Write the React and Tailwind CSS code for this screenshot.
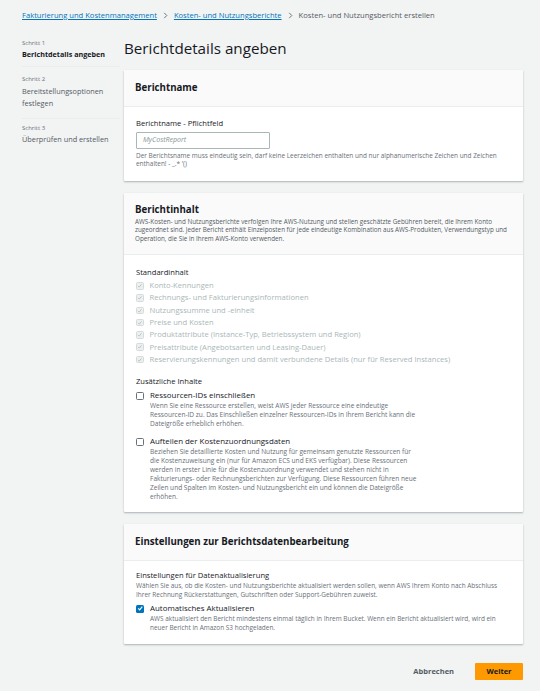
import React from "react";

function Chevron() {
  return (
    <svg viewBox="0 0 8 8" className="w-[7px] h-[7px] mx-[5px] text-[#687078]" fill="none" stroke="currentColor" strokeWidth="1.1">
      <path d="M2.5 1 L5.5 4 L2.5 7" />
    </svg>
  );
}

function Box({ checked, disabled }) {
  if (disabled) {
    return (
      <div className="w-[7.5px] h-[7.5px] shrink-0 rounded-[1.5px] border border-[#d5dbdb] bg-[#eef0f0] flex items-center justify-center">
        <svg viewBox="0 0 8 8" className="w-[5.5px] h-[5.5px]" fill="none" stroke="#b8c2c3" strokeWidth="1.4">
          <path d="M1.5 4.2 L3.3 6 L6.5 2" />
        </svg>
      </div>
    );
  }
  if (checked) {
    return (
      <div className="w-[8px] h-[8px] shrink-0 rounded-[1.5px] bg-[#0073bb] flex items-center justify-center">
        <svg viewBox="0 0 8 8" className="w-[6.5px] h-[6.5px]" fill="none" stroke="#ffffff" strokeWidth="1.4">
          <path d="M1.5 4.2 L3.3 6 L6.5 2" />
        </svg>
      </div>
    );
  }
  return <div className="w-[8px] h-[8px] shrink-0 rounded-[1.5px] border border-[#687078] bg-white" />;
}

function Card({ title, desc, children, bodyClass }) {
  return (
    <div className="bg-white shadow-[0_1px_2px_rgba(0,28,36,0.3)] rounded-[1px]">
      <div className={"bg-[#fafafa] border-b border-[#eaeded] px-[11px] " + (desc ? "pt-[10px] pb-[10px]" : "pt-[11px] pb-[11px]")}>
        <div className="text-[9.7px] font-bold text-[#16191f] leading-[14px]">{title}</div>
        {desc && <p className="text-[6.3px] leading-[8.7px] text-[#545b64] mt-[1px] max-w-[375px]">{desc}</p>}
      </div>
      <div className={"px-[12px] " + bodyClass}>{children}</div>
    </div>
  );
}

function Option({ label, desc, checked, descClass }) {
  return (
    <div className="flex gap-[6px]">
      <div className="pt-[2px]"><Box checked={checked} /></div>
      <div>
        <div className="text-[7.9px] leading-[11px] text-[#16191f]">{label}</div>
        <p className={"text-[6.55px] leading-[9px] text-[#687078] " + descClass}>{desc}</p>
      </div>
    </div>
  );
}

const std = [
  "Konto-Kennungen",
  "Rechnungs- und Fakturierungsinformationen",
  "Nutzungssumme und -einheit",
  "Preise und Kosten",
  "Produktattribute (Instance-Typ, Betriebssystem und Region)",
  "Preisattribute (Angebotsarten und Leasing-Dauer)",
  "Reservierungskennungen und damit verbundene Details (nur für Reserved Instances)",
];

export default function App() {
  return (
    <div className="min-h-screen bg-[#f2f3f3] pl-[22px] pr-[17px] pt-[9px] pb-[10px] text-[#16191f]" style={{ fontFamily: '"Open Sans", "Noto Sans", sans-serif' }}>
      <nav className="flex items-center text-[7.6px] leading-[12px]">
        <span className="text-[#0073bb] underline">Fakturierung und Kostenmanagement</span>
        <Chevron />
        <span className="text-[#0073bb] underline">Kosten- und Nutzungsberichte</span>
        <Chevron />
        <span className="text-[#545b64]">Kosten- und Nutzungsbericht erstellen</span>
      </nav>

      <div className="flex mt-[16px]">
        <aside className="w-[98px] shrink-0 mr-[4px]">
          <div className="pt-[1px] pb-[5.5px] border-b border-[#eaeded]">
            <div className="text-[6px] leading-[10px] text-[#687078]">Schritt 1</div>
            <div className="text-[7.2px] leading-[12px] font-bold">Berichtdetails angeben</div>
          </div>
          <div className="pt-[7px] pb-[9px] border-b border-[#eaeded]">
            <div className="text-[6px] leading-[10px] text-[#687078]">Schritt 2</div>
            <div className="text-[7.3px] leading-[12px] text-[#545b64] mt-[1.5px]">Bereitstellungsoptionen festlegen</div>
          </div>
          <div className="pt-[4px]">
            <div className="text-[6px] leading-[10px] text-[#687078]">Schritt 3</div>
            <div className="text-[7.3px] leading-[12px] text-[#545b64]">Überprüfen und erstellen</div>
          </div>
        </aside>

        <main className="flex-1 min-w-0">
          <h1 className="text-[15.2px] leading-[22px] font-normal text-[#16191f]">Berichtdetails angeben</h1>

          <div className="mt-[11px] flex flex-col gap-[12px]">
            <Card title="Berichtname" bodyClass="pt-[10.5px] pb-[12px]">
              <div className="text-[7.6px] leading-[11px] font-medium text-[#16191f]">Berichtname - Pflichtfeld</div>
              <div className="mt-[3px] w-[134px] h-[17px] border border-[#aab7b8] rounded-[1px] flex items-center px-[6px] text-[7px] italic text-[#879596]">MyCostReport</div>
              <p className="text-[6.45px] leading-[8.5px] text-[#687078] mt-[3px] max-w-[370px]">
                Der Berichtsname muss eindeutig sein, darf keine Leerzeichen enthalten und nur alphanumerische Zeichen und Zeichen enthalten! - _.* '()
              </p>
            </Card>

            <Card
              title="Berichtinhalt"
              bodyClass="pt-[12px] pb-[11.5px]"
              desc="AWS-Kosten- und Nutzungsberichte verfolgen Ihre AWS-Nutzung und stellen geschätzte Gebühren bereit, die Ihrem Konto zugeordnet sind. Jeder Bericht enthält Einzelposten für jede eindeutige Kombination aus AWS-Produkten, Verwendungstyp und Operation, die Sie in Ihrem AWS-Konto verwenden."
            >
              <div className="text-[7.6px] leading-[11px] text-[#16191f]">Standardinhalt</div>
              <div className="flex flex-col mt-[2px]">
                {std.map((s) => (
                  <div key={s} className="flex items-center gap-[6px] h-[12.3px]">
                    <Box disabled />
                    <span className="text-[7.6px] text-[#aab7b8]">{s}</span>
                  </div>
                ))}
              </div>
              <div className="text-[7.6px] leading-[11px] text-[#16191f] mt-[10px]">Zusätzliche Inhalte</div>
              <div className="mt-[3px]">
                <Option
                  label="Ressourcen-IDs einschließen"
                  descClass="max-w-[272px]"
                  desc="Wenn Sie eine Ressource erstellen, weist AWS jeder Ressource eine eindeutige Ressourcen-ID zu. Das Einschließen einzelner Ressourcen-IDs in Ihrem Bericht kann die Dateigröße erheblich erhöhen."
                />
              </div>
              <div className="mt-[8px]">
                <Option
                  label="Aufteilen der Kostenzuordnungsdaten"
                  descClass="max-w-[268.5px]"
                  desc="Beziehen Sie detaillierte Kosten und Nutzung für gemeinsam genutzte Ressourcen für die Kostenzuweisung ein (nur für Amazon ECS und EKS verfügbar). Diese Ressourcen werden in erster Linie für die Kostenzuordnung verwendet und stehen nicht in Fakturierungs- oder Rechnungsberichten zur Verfügung. Diese Ressourcen führen neue Zeilen und Spalten im Kosten- und Nutzungsbericht ein und können die Dateigröße erhöhen."
                />
              </div>
            </Card>

            <Card title="Einstellungen zur Berichtsdatenbearbeitung" bodyClass="pt-[8.5px] pb-[12.5px]">
              <div className="text-[7.6px] leading-[11px] text-[#16191f]">Einstellungen für Datenaktualisierung</div>
              <p className="text-[6.45px] leading-[9px] text-[#687078] max-w-[370px]">
                Wählen Sie aus, ob die Kosten- und Nutzungsberichte aktualisiert werden sollen, wenn AWS Ihrem Konto nach Abschluss Ihrer Rechnung Rückerstattungen, Gutschriften oder Support-Gebühren zuweist.
              </p>
              <div className="mt-[4px]">
                <div className="flex gap-[6px]">
                  <div className="pt-[2px]"><Box checked /></div>
                  <div>
                    <div className="text-[7.9px] leading-[11px] text-[#16191f]">Automatisches Aktualisieren</div>
                    <p className="text-[6.45px] leading-[9px] text-[#687078] max-w-[356px]">
                      AWS aktualisiert den Bericht mindestens einmal täglich in Ihrem Bucket. Wenn ein Bericht aktualisiert wird, wird ein neuer Bericht in Amazon S3 hochgeladen.
                    </p>
                  </div>
                </div>
              </div>
            </Card>
          </div>

          <div className="flex justify-end items-center gap-[21px] mt-[19px]">
            <button className="text-[7.5px] font-bold text-[#545b64]">Abbrechen</button>
            <button className="h-[17px] w-[48px] rounded-[1px] bg-[#ff9900] text-[7.5px] font-bold text-[#16191f]">Weiter</button>
          </div>
        </main>
      </div>
    </div>
  );
}
